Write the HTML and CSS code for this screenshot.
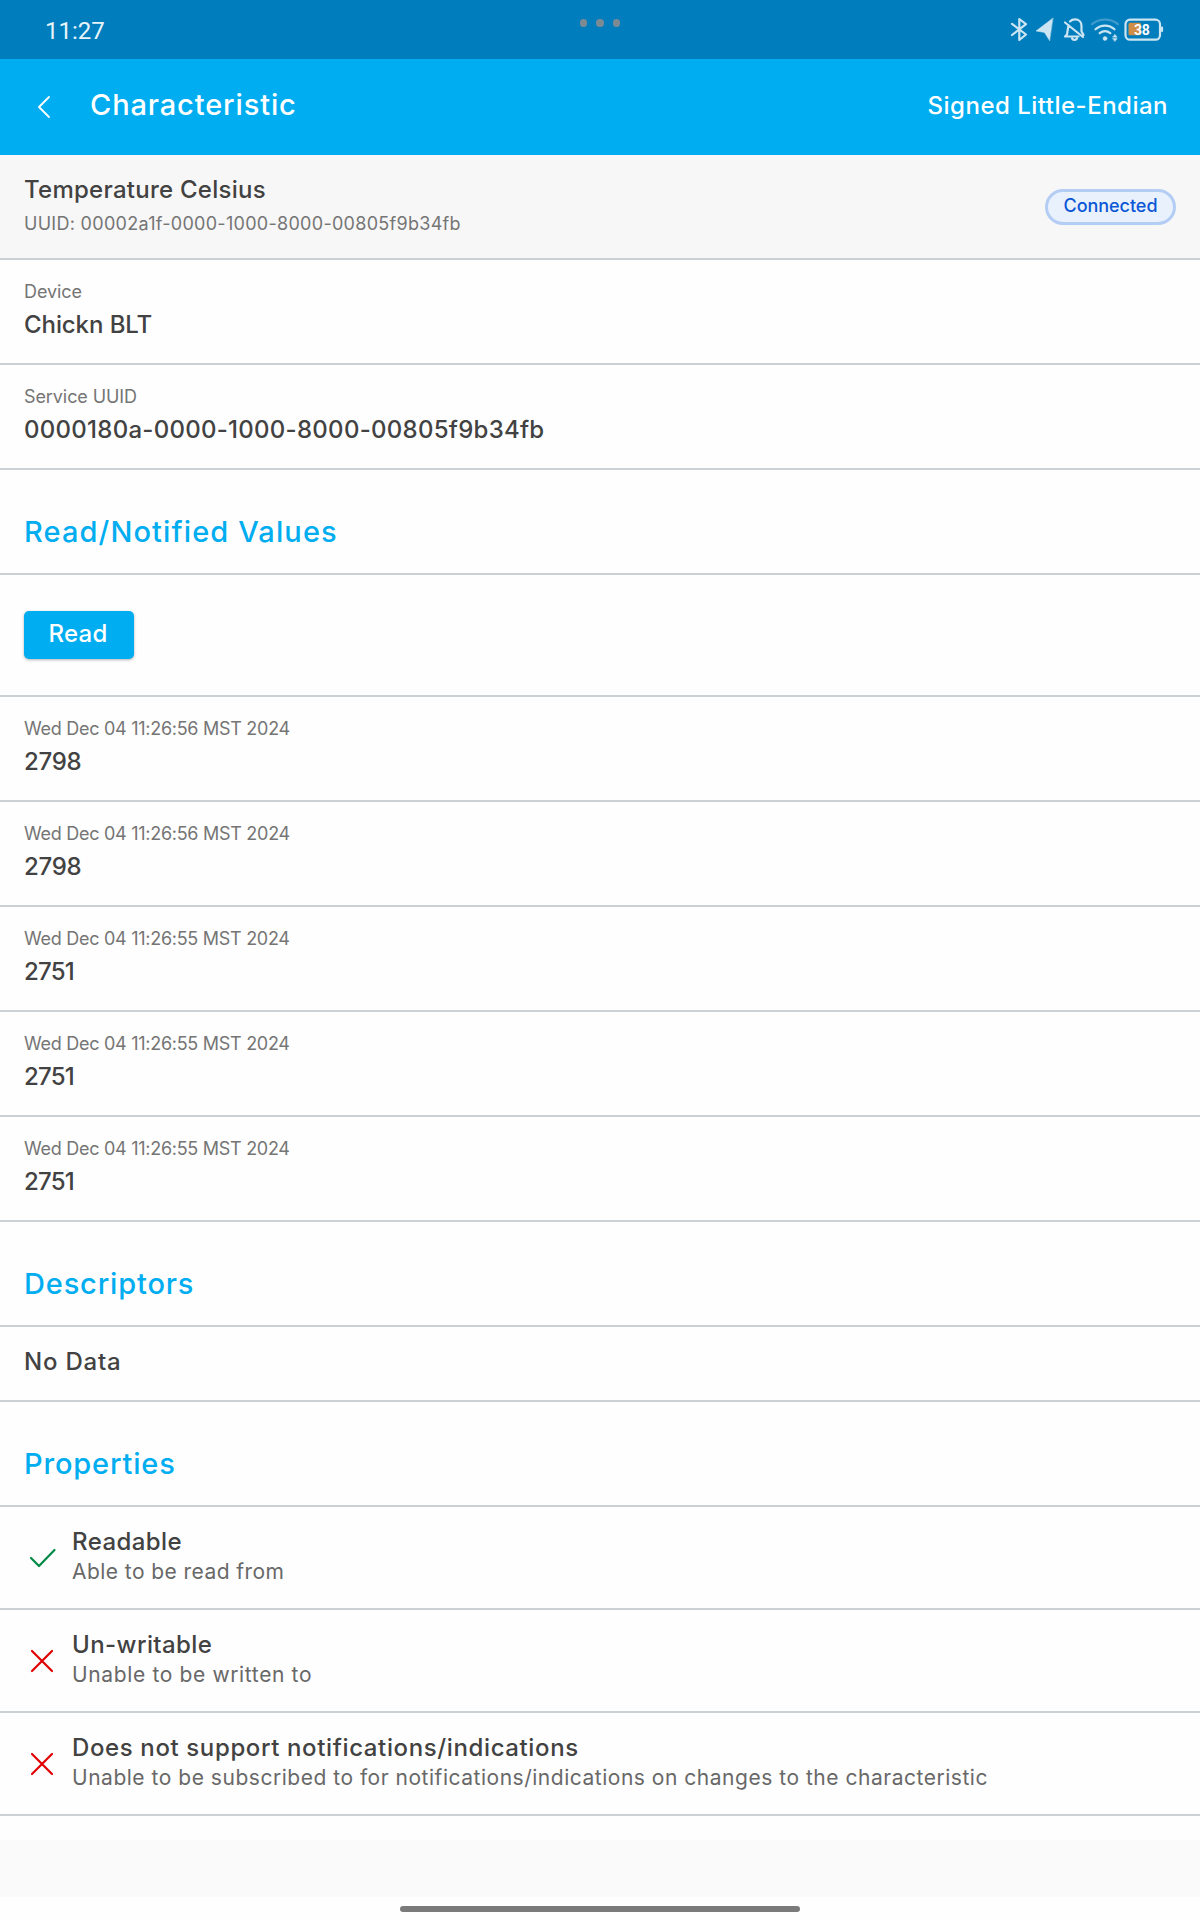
FILE: index.html
```html
<!DOCTYPE html>
<html lang="en">
<head>
<meta charset="utf-8">
<title>Characteristic</title>
<link rel="stylesheet" href="styles.css">
</head>
<body>
<div class="status">
  <span class="clock">11:27</span>
  <div class="dots"><i></i><i></i><i></i></div>
  <div class="tray">
    <svg width="20" height="26" viewBox="0 0 20 26"><path d="M3 7.8 17 18.5 10.3 24V3L17 8.2 3 19"/></svg>
    <svg width="20" height="26" viewBox="0 0 20 26"><path class="solid" d="M17.8 2.2 1 15l8.500 1.500L14.5 24.500z"/></svg>
    <svg width="24" height="26" viewBox="0 0 24 26"><path d="M8 5.4C9.3 4 11 3.4 13 3.4c4 0 6.5 3 6.5 6.500v5.500l2 3.600M6.500 9 5 18.500 3 20.500h13.500M3 6.500 21 21M10 22.500q2.500 3 5 0"/></svg>
    <svg width="30" height="26" viewBox="0 0 30 26"><path class="faint" d="M2 8.200c7-6 19-6 26 0"/><path d="M5.500 13.300c5.500-5 13.500-5 19 0M9.700 17.200c3.200-2.600 7.400-2.600 10.600 0"/><circle class="solid" cx="15" cy="22.500" r="2"/><path class="solid" d="M25 18.500l2.200 2.700h-4.400zM25 25.300l2.200-2.700h-4.400z"/></svg>
    <svg width="40" height="26" viewBox="0 0 40 26"><rect class="charge" x="4.500" y="6.800" width="12.500" height="12.500" rx="1.500"/><rect x="1.500" y="3.700" width="34.500" height="20" rx="4.500"/><path d="M38 11.500v3.500"/><text x="10" y="19">38</text></svg>
  </div>
</div>
<header class="appbar">
  <svg class="back" width="14" height="24" viewBox="0 0 14 24"><path d="M12 2 2 12 12 22"/></svg>
  <h1>Characteristic</h1>
  <span class="format">Signed Little-Endian</span>
</header>
<main>
  <section class="row summary">
    <div>
      <div class="value name">Temperature Celsius</div>
      <div class="label uuid">UUID: 00002a1f-0000-1000-8000-00805f9b34fb</div>
    </div>
    <span class="badge">Connected</span>
  </section>
  <section class="row"><div class="label">Device</div><div class="value device">Chickn BLT</div></section>
  <section class="row"><div class="label">Service UUID</div><div class="value id">0000180a-0000-1000-8000-00805f9b34fb</div></section>
  <h2 class="wide">Read/Notified Values</h2>
  <section class="action"><button>Read</button></section>
  <section class="row"><div class="label time">Wed Dec 04 11:26:56 MST 2024</div><div class="value num">2798</div></section>
  <section class="row"><div class="label time">Wed Dec 04 11:26:56 MST 2024</div><div class="value num">2798</div></section>
  <section class="row"><div class="label time">Wed Dec 04 11:26:55 MST 2024</div><div class="value num tight">2751</div></section>
  <section class="row"><div class="label time">Wed Dec 04 11:26:55 MST 2024</div><div class="value num tight">2751</div></section>
  <section class="row"><div class="label time">Wed Dec 04 11:26:55 MST 2024</div><div class="value num tight">2751</div></section>
  <h2>Descriptors</h2>
  <section class="empty value">No Data</section>
  <h2>Properties</h2>
  <section class="property">
    <svg class="yes" width="36" height="36" viewBox="0 0 36 36"><path d="M7 18 15 26 30.500 10"/></svg>
    <div><div class="value prop">Readable</div><div class="detail">Able to be read from</div></div>
  </section>
  <section class="property">
    <svg class="no" width="36" height="36" viewBox="0 0 36 36"><path d="M8 8 28 28M28 8 8 28"/></svg>
    <div><div class="value prop">Un-writable</div><div class="detail roomy">Unable to be written to</div></div>
  </section>
  <section class="property">
    <svg class="no" width="36" height="36" viewBox="0 0 36 36"><path d="M8 8 28 28M28 8 8 28"/></svg>
    <div><div class="value support">Does not support notifications/indications</div><div class="detail long">Unable to be subscribed to for notifications/indications on changes to the characteristic</div></div>
  </section>
</main>
<footer class="bottom"></footer>
<nav class="gesture"><i></i></nav>
</body>
</html>
```
FILE: styles.css
```css
* { box-sizing: border-box; }
body {
  margin: 0;
  height: 1920px;
  overflow: hidden;
  display: flex;
  flex-direction: column;
  background: #fefefe;
  color: #424242;
  font-family: Inter, "Noto Sans", sans-serif;
  white-space: nowrap;
}
svg { display: block; fill: none; flex: none; }

.status {
  height: 59px;
  background: #007dbd;
  display: grid;
  grid-template-columns: 1fr auto 1fr;
  color: #e9f4fa;
}
.clock { padding: 17px 0 0 45px; font: 400 24px/28px Roboto, sans-serif; }
.dots { display: flex; gap: 9px; padding-top: 19px; }
.dots i { width: 7.500px; height: 7.500px; border-radius: 50%; background: #7d8a92; }
.tray { display: flex; justify-content: flex-end; padding: 16px 36px 0 0; gap: 4px; }
.tray svg:first-child { margin-right: 2px; }
.tray svg:nth-child(2) { margin-right: 3px; }
.tray svg { stroke: #cce5f2; stroke-width: 2.200; stroke-linejoin: round; stroke-linecap: round; }
.tray .solid { fill: #cce5f2; stroke-width: .5; }
.tray .faint { stroke: #3f9bcd; }
.tray .charge { fill: #cf8d45; stroke: none; }
.tray text { fill: #fff; stroke: none; font: 700 14px Roboto, sans-serif; letter-spacing: -.3px; }

.appbar {
  height: 96px;
  background: #00adf0;
  color: #fff;
  display: flex;
  align-items: flex-start;
  padding: 26px 32px 0 37px;
}
.back { margin-top: 10px; stroke: #fff; stroke-width: 1.800; stroke-linecap: round; stroke-linejoin: round; }
h1 { margin: 0 0 0 39px; font-size: 29px; line-height: 40px; font-weight: 500; letter-spacing: .87px; }
.format { margin: 5px 0 0 auto; font-size: 24px; line-height: 32px; font-weight: 450; letter-spacing: .49px; }

.row, .action, .property, .empty, h2 { border-bottom: 2px solid #cbd0d5; }
.row { height: 105px; padding: 20px 24px 0; }
.label { font-size: 18px; line-height: 24px; color: #757575; letter-spacing: -.09px; }
.value { font-size: 24px; line-height: 32px; font-weight: 450; }
.label + .value { margin-top: 5px; }
.summary { display: flex; justify-content: space-between; background: #f7f7f7; padding-top: 19px; }
.summary .label { margin-top: 6px; }
.name { letter-spacing: .26px; }
.uuid { letter-spacing: .29px; }
.device { letter-spacing: -.08px; }
.id { letter-spacing: .27px; }
.time { letter-spacing: -.28px; }
.num { letter-spacing: -.29px; }
.tight { letter-spacing: -.8px; }
.badge {
  width: 131px;
  height: 36px;
  margin-top: 15px;
  border: 3px solid #b4cdf4;
  border-radius: 18px;
  background: #e9f1fc;
  color: #0b57d6;
  font-size: 18px;
  font-weight: 450;
  line-height: 28px;
  text-align: center;
  letter-spacing: -.04px;
}
h2 {
  height: 105px;
  margin: 0;
  padding: 42px 24px 0;
  font-size: 29px;
  line-height: 40px;
  font-weight: 450;
  color: #00adf0;
  letter-spacing: .84px;
}
.wide { letter-spacing: 1.12px; }
.action { height: 122px; padding: 36px 24px 0; }
button {
  display: block;
  width: 110px;
  height: 48px;
  padding: 0 2px 3px 0;
  border: 0;
  border-radius: 5px;
  background: #00adf0;
  box-shadow: 0 1px 3px rgba(0, 0, 0, .3);
  color: #fff;
  font: 500 24px/45px Inter, sans-serif;
  letter-spacing: .27px;
}
.empty { height: 75px; padding: 19px 24px 0; letter-spacing: .79px; }
.property { height: 103px; padding: 19px 24px 0; display: flex; gap: 12px; }
.property svg { margin-top: 14px; stroke-width: 2.200; stroke-linecap: round; stroke-linejoin: round; }
.yes { stroke: #008a45; }
.no { stroke: #e00000; }
.prop { letter-spacing: .42px; }
.support { letter-spacing: .62px; }
.detail { font-size: 21px; line-height: 28px; color: #686868; letter-spacing: .44px; }
.roomy { letter-spacing: .64px; }
.long { letter-spacing: .52px; }

.bottom { margin-top: 24px; height: 57px; background: #fafafa; }
.gesture { padding-top: 9px; display: flex; justify-content: center; }
.gesture i { width: 400px; height: 6px; border-radius: 3px; background: #7a7a7a; }
```
